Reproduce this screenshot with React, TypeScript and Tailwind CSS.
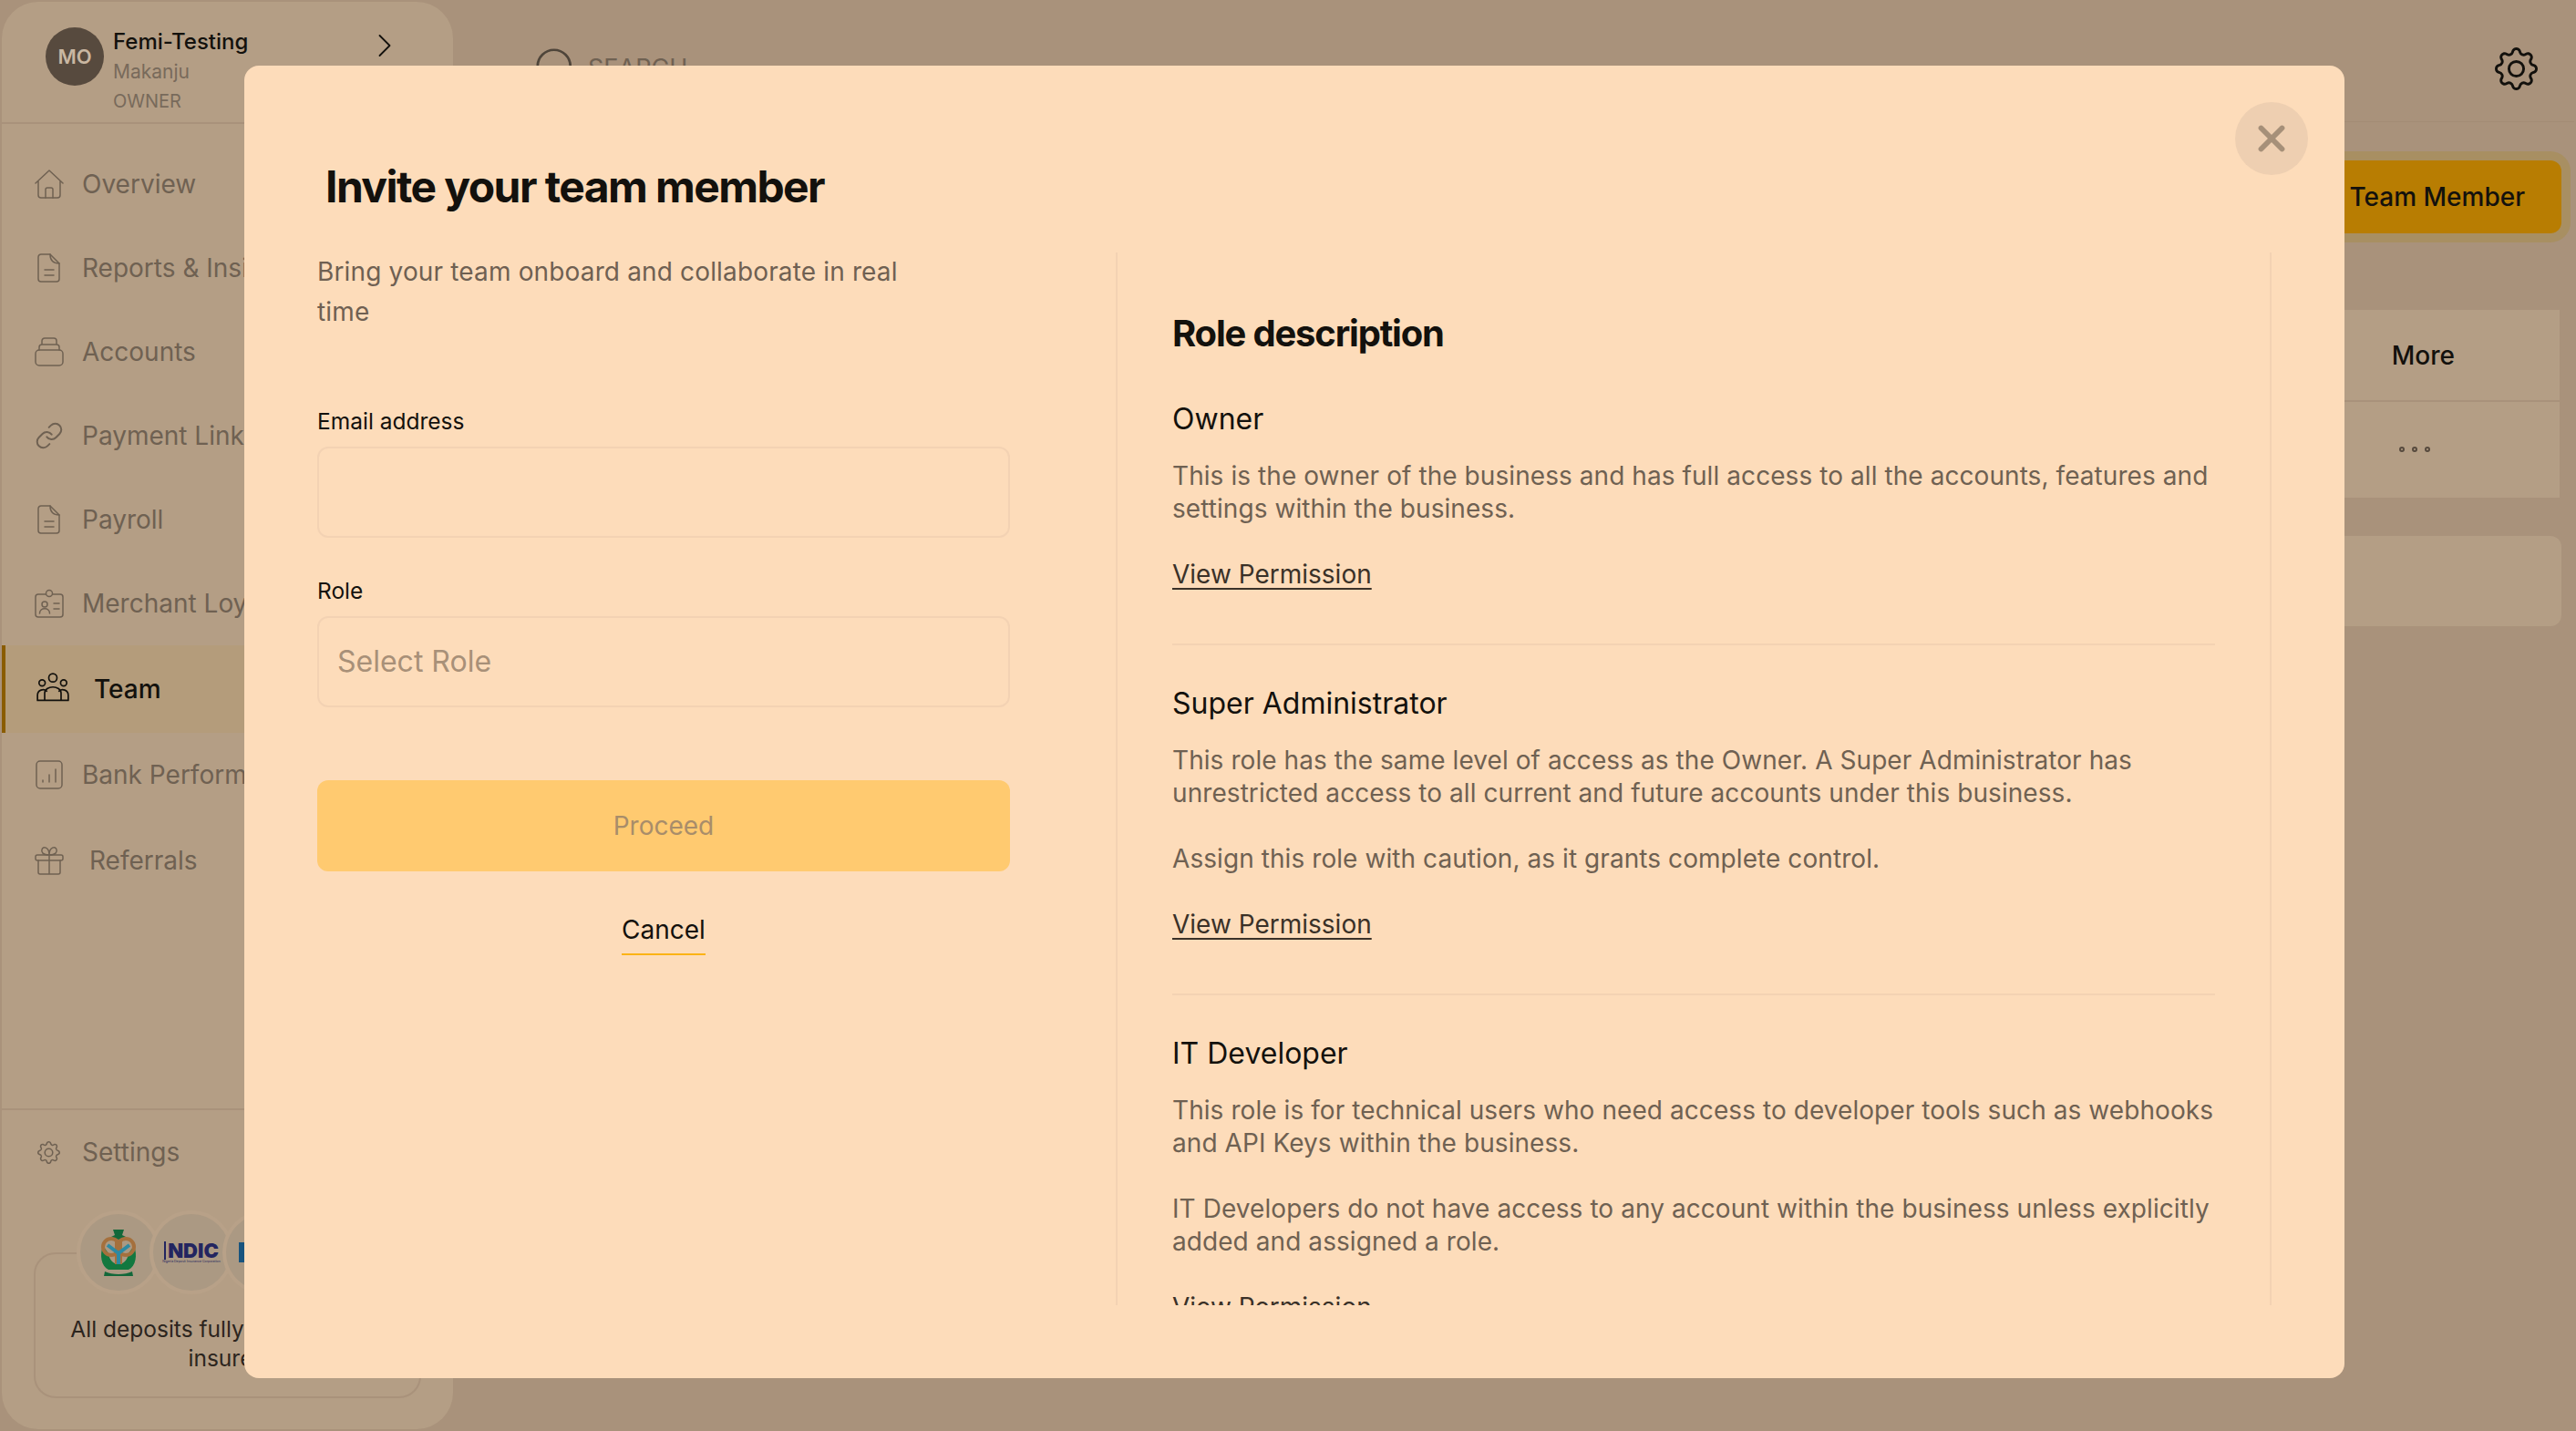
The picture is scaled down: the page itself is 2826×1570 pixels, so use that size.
import { ChevronRight, Link as LinkIcon, Search, X } from 'lucide-react';
import { BsGear } from 'react-icons/bs';
import type { ReactNode } from 'react';

function IconBox({ children, size = 32 }: { children: ReactNode; size?: number }) {
  return (
    <svg width={size} height={size} viewBox="0 0 32 32" fill="none" stroke="currentColor" strokeWidth={1.5} strokeLinecap="round" strokeLinejoin="round" className="shrink-0">
      {children}
    </svg>
  );
}

const HomeIcon = () => (
  <IconBox>
    <path d="M1 15 16 1l15 14M4 13v15a3 3 0 0 0 3 3h18a3 3 0 0 0 3-3V13" />
    <path d="M12 31v-9a2 2 0 0 1 2-2h4a2 2 0 0 1 2 2v9" />
  </IconBox>
);

const DocIcon = () => (
  <IconBox>
    <path d="M7 1h10l10 10v17a3 3 0 0 1-3 3H7a3 3 0 0 1-3-3V4a3 3 0 0 1 3-3Z" />
    <path d="M17 1c0 6 3 10 10 10M11 18h10M11 24h10" />
  </IconBox>
);

const AccountsIcon = () => (
  <IconBox>
    <rect x="1" y="14" width="30" height="17" rx="4" />
    <path d="M5 14v-3a3 3 0 0 1 3-3h16a3 3 0 0 1 3 3v3M8 8V4a3 3 0 0 1 3-3h10a3 3 0 0 1 3 3v4" />
  </IconBox>
);

const MerchantIcon = () => (
  <IconBox>
    <rect x="1" y="6" width="30" height="25" rx="3" />
    <circle cx="16" cy="5" r="3.5" fill="#b49e85" />
    <circle cx="11" cy="17" r="3" />
    <path d="M5.5 27c0-7 11-7 11 0M21 16h6M21 22h6" />
  </IconBox>
);

const TeamIcon = () => (
  <IconBox size={36}>
    <circle cx="16" cy="5" r="4" />
    <circle cx="5.5" cy="10" r="3" />
    <circle cx="26.5" cy="10" r="3" />
    <path d="M1 27v-5c0-5 6-7 9-4M31 27v-5c0-5-6-7-9-4M8 27v-7c0-8 16-8 16 0v7M1 27h30" />
  </IconBox>
);

const BankIcon = () => (
  <IconBox>
    <rect x="2" y="1" width="28" height="30" rx="4" />
    <path d="M9 24v-2M16 24v-8M23 24V10" />
  </IconBox>
);

const GiftIcon = () => (
  <IconBox>
    <rect x="1" y="10" width="30" height="6" rx="2" />
    <path d="M4 16v13a2 2 0 0 0 2 2h20a2 2 0 0 0 2-2V16M16 10v21M16 10c-7 0-9-3-8-6 1-4 8-3 8 6ZM16 10c7 0 9-3 8-6-1-4-8-3-8 6Z" />
  </IconBox>
);

function CbnLogo() {
  return (
    <svg width="42" height="54" viewBox="0 0 42 54" fill="none">
      <path d="M15 2h12l-2 6 4 2-8 3-8-3 4-2Z" fill="#12683a" />
      <path d="M4 20C0 30 2 42 10 46l22 0c8-4 10-16 6-26l-6 8c-1 8-6 12-11 12s-10-4-11-12Z" fill="#12783f" />
      <circle cx="13" cy="21" r="9" stroke="#a5703d" strokeWidth="4" />
      <circle cx="29" cy="21" r="9" stroke="#a5703d" strokeWidth="4" />
      <path d="M21 13v27" stroke="#a5703d" strokeWidth="8" />
      <path d="M9 19l12 9 12-9M21 28v12" stroke="#2d8aa3" strokeWidth="4" />
      <path d="M6 48c8 4 22 4 30 0l1 5H5Z" fill="#12683a" />
    </svg>
  );
}

const navItems = [
  { label: 'Overview', icon: <HomeIcon /> },
  { label: 'Reports & Insights', icon: <DocIcon /> },
  { label: 'Accounts', icon: <AccountsIcon /> },
  { label: 'Payment Links', icon: <LinkIcon size={32} strokeWidth={1.5} /> },
  { label: 'Payroll', icon: <DocIcon /> },
  { label: 'Merchant Loyalty', icon: <MerchantIcon /> },
];

function Sidebar() {
  return (
    <aside className="flex h-[1566px] w-[495px] shrink-0 flex-col overflow-hidden rounded-[40px] bg-[#b49e85]">
      {/* Business switcher */}
      <div className="flex h-[134px] shrink-0 items-start border-b-2 border-[#a9927b] pl-[48px] pr-[53px] pt-[28px]">
        <div className="flex size-[64px] items-center justify-center rounded-full bg-[#574a3e] text-[22px] font-semibold text-[#c9b7a2]">MO</div>
        <div className="ml-[10px] flex-1">
          <div className="text-[24px] font-medium leading-[32px] text-[#13110d]">Femi-Testing</div>
          <div className="text-[21px] leading-[34px] text-[#786a5b]">Makanju</div>
          <div className="text-[20px] leading-[30px] text-[#786a5b]">OWNER</div>
        </div>
        <ChevronRight size={44} strokeWidth={1} className="-mt-[2px] text-[#13110d]" />
      </div>

      <nav className="mt-[20px] flex flex-col text-[28px] text-[#6f6152]">
        {navItems.map((item) => (
          <div key={item.label} className="flex h-[92px] items-center gap-[20px] whitespace-nowrap pl-[36px]">
            {item.icon}
            <span>{item.label}</span>
          </div>
        ))}
        <div className="flex h-[96px] items-center whitespace-nowrap border-l-4 border-[#8a5c00] bg-[#b49c7b] pl-[34px] font-medium text-[#13110d]">
          <TeamIcon />
          <span className="ml-[27px]">Team</span>
        </div>
        <div className="flex h-[92px] items-center gap-[20px] whitespace-nowrap pl-[36px]">
          <BankIcon />
          <span>Bank Performance</span>
        </div>
        <div className="flex h-[96px] items-center gap-[28px] whitespace-nowrap pl-[36px]">
          <GiftIcon />
          <span>Referrals</span>
        </div>
      </nav>

      <div className="mt-auto flex flex-col border-t-2 border-[#a9927b] px-[35px] pb-[34px]">
        <div className="flex h-[92px] items-center gap-[24px] pl-[4px] text-[28px] text-[#6f6152]">
          <BsGear size={25} />
          <span>Settings</span>
        </div>

        {/* Regulators */}
        <div className="relative mt-[64px] h-[160px] whitespace-nowrap rounded-[24px] border-2 border-[#a9927b] pt-[66px] text-center text-[24.5px] leading-[32px] text-[#2c251e]">
          <div className="absolute left-[45px] top-[-48px] flex">
            <div className="flex size-[92px] items-center justify-center rounded-full border-4 border-[#b8a188] bg-[#ab9983]">
              <CbnLogo />
            </div>
            <div className="-ml-[12px] flex size-[92px] flex-col items-center justify-center rounded-full border-4 border-[#b8a188] bg-[#ab9983] text-[#232560]">
              <span className="border-l-2 border-[#232560] pl-[2px] text-[22px] font-black leading-[20px]">NDIC</span>
              <span className="text-[3.5px] leading-[5px]">Nigeria Deposit Insurance Corporation</span>
            </div>
            <div className="-ml-[12px] flex size-[92px] items-center justify-center rounded-full border-4 border-[#b8a188] bg-[#ab9983]">
              <span className="mr-[50px] h-[22px] w-[6px] bg-[#19547e]" />
            </div>
          </div>
          <p>
            All deposits fully licensed and
            <br />
            insured
          </p>
        </div>
      </div>
    </aside>
  );
}

function Main() {
  return (
    <main className="ml-[2px] flex min-w-0 flex-1 flex-col">
      <header className="flex h-[132px] shrink-0 items-start justify-between border-b border-[#a38c75] pl-[84px] pr-[40px] pt-[46px]">
        <div className="flex items-center gap-[8px] text-[27px] text-[#6f6152]">
          <Search size={54} strokeWidth={1.2} className="text-[#4f453a]" />
          <span>SEARCH</span>
        </div>
        <BsGear size={47} className="mt-[4px] text-[#13110d]" />
      </header>

      <div className="flex flex-col pl-[48px] pr-[14px]">
        <div className="mt-[42px] flex justify-end">
          <button className="flex h-[80px] items-center rounded-[12px] bg-[#b87d02] pl-[60px] pr-[40px] text-[28px] font-medium text-[#13110d] ring-10 ring-[#a88f62]">
            Invite Team Member
          </button>
        </div>

        <div className="mt-[84px] mr-[2px] bg-[#b49e85]">
          <div className="flex h-[101px] items-center justify-end border-b-2 border-[#a9927b] pr-[115px] text-[28px] font-medium text-[#13110d]">More</div>
          <div className="flex h-[105px] items-center justify-end gap-[8px] pb-[2px] pr-[142px]">
            <span className="size-[6px] rounded-full border-2 border-[#574a3e]" />
            <span className="size-[6px] rounded-full border-2 border-[#574a3e]" />
            <span className="size-[6px] rounded-full border-2 border-[#574a3e]" />
          </div>
        </div>

        <div className="mt-[42px] h-[99px] rounded-[12px] bg-[#b49e85]" />
      </div>
    </main>
  );
}

function Field({ label, children }: { label: string; children?: ReactNode }) {
  return (
    <div>
      <div className="text-[24.5px] leading-[32px] text-[#13110d]">{label}</div>
      <div className="mt-[12px] flex h-[100px] items-center rounded-[12px] border-2 border-[#f3d2b3] px-[20px] text-[32px] text-[#a89078]">
        {children}
      </div>
    </div>
  );
}

function RoleBlock({ title, paragraphs, last }: { title: string; paragraphs: string[]; last?: boolean }) {
  return (
    <section className={last ? '' : 'border-b-2 border-[#f3d2b3] pb-[58px] mb-[44px]'}>
      <h3 className="text-[32px] leading-[40px] text-[#13110d]">{title}</h3>
      <div className="mt-[24px] flex flex-col gap-[36px] text-[28px] leading-[36px] tracking-[0.07px] text-[#6f6152]">
        {paragraphs.map((text) => (
          <p key={text}>{text}</p>
        ))}
      </div>
      <a className="mt-[36px] inline-block text-[28px] leading-[36px] text-[#3a3128] underline underline-offset-[5px]">View Permission</a>
    </section>
  );
}

function InviteModal() {
  return (
    <div className="absolute left-[268px] top-[72px] flex h-[1440px] w-[2304px] rounded-[16px] bg-[#fddcba]">
      <button className="absolute right-[40px] top-[40px] flex size-[80px] items-center justify-center rounded-full bg-[#eecfb1] text-[#a69079]">
        <X size={46} strokeWidth={3} />
      </button>

      <div className="w-[956px] shrink-0 pl-[80px] pr-[116px] pt-[101px]">
        <h2 className="ml-[9px] text-[48px] font-bold leading-[64px] tracking-[-0.033em] text-[#13110d]">Invite your team member</h2>
        <p className="mt-[39px] w-[680px] text-[28px] leading-[44px] tracking-[0.15px] text-[#6f6052]">Bring your team onboard and collaborate in real time</p>

        <div className="mt-[82px] flex flex-col gap-[42px]">
          <Field label="Email address" />
          <Field label="Role">Select Role</Field>
        </div>

        <button className="mt-[80px] h-[100px] w-full rounded-[12px] bg-[#ffca70] text-[28px] text-[#a88d6a]">Proceed</button>
        <div className="mt-[46px] flex justify-center">
          <button className="border-b-2 border-[#fbb316] pb-[8px] text-[28px] leading-[36px] text-[#13110d]">Cancel</button>
        </div>
      </div>

      <div className="mt-[205px] h-[1155px] w-[1268px] overflow-hidden border-x-2 border-[#f3d2b3] pl-[60px] pr-[60px] pt-[65px]">
        <h2 className="mb-[50px] text-[40px] font-bold leading-[48px] tracking-[-0.03em] text-[#13110d]">Role description</h2>
        <RoleBlock
          title="Owner"
          paragraphs={['This is the owner of the business and has full access to all the accounts, features and settings within the business.']}
        />
        <RoleBlock
          title="Super Administrator"
          paragraphs={[
            'This role has the same level of access as the Owner. A Super Administrator has unrestricted access to all current and future accounts under this business.',
            'Assign this role with caution, as it grants complete control.',
          ]}
        />
        <RoleBlock
          title="IT Developer"
          last
          paragraphs={[
            'This role is for technical users who need access to developer tools such as webhooks and API Keys within the business.',
            'IT Developers do not have access to any account within the business unless explicitly added and assigned a role.',
          ]}
        />
      </div>
    </div>
  );
}

export default function App() {
  return (
    <div className="relative flex h-[1570px] w-[2826px] overflow-hidden bg-[#a9927b] p-[2px] font-['Inter',sans-serif]">
      <Sidebar />
      <Main />
      <InviteModal />
    </div>
  );
}
